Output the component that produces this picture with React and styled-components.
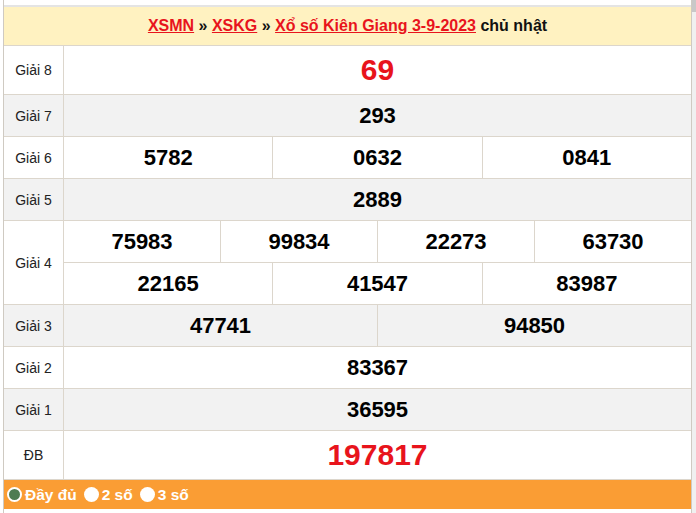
import React from 'react';
import styled, { createGlobalStyle } from 'styled-components';

const GlobalStyle = createGlobalStyle`
  html, body {
    margin: 0;
    padding: 0;
    background: #fff;
    font-family: "Liberation Sans", Arial, sans-serif;
  }
`;

const prizes = [
  { label: 'Giải 8', rows: [['69']], big: true, tall: true },
  { label: 'Giải 7', rows: [['293']] },
  { label: 'Giải 6', rows: [['5782', '0632', '0841']] },
  { label: 'Giải 5', rows: [['2889']] },
  { label: 'Giải 4', rows: [['75983', '99834', '22273', '63730'], ['22165', '41547', '83987']] },
  { label: 'Giải 3', rows: [['47741', '94850']] },
  { label: 'Giải 2', rows: [['83367']] },
  { label: 'Giải 1', rows: [['36595']] },
  { label: 'ĐB', rows: [['197817']], big: true, tall: true },
];

const App = () => (
  <>
    <GlobalStyle />
    <Page>
      <Main>
        <TopStrip />
        <Header>
          <Crumb href="#">XSMN</Crumb> » <Crumb href="#">XSKG</Crumb> »{' '}
          <Crumb href="#">Xổ số Kiên Giang 3-9-2023</Crumb> chủ nhật
        </Header>
        <Table>
          {prizes.map((p, i) => (
            <Row key={p.label} $alt={i % 2 === 1}>
              <Label>{p.label}</Label>
              <Numbers>
                {p.rows.map((r, j) => (
                  <NumRow key={j} $tall={p.tall} $first={j === 0}>
                    {r.map((n, k) => (
                      <Num key={k} $big={p.big} $first={k === 0}>
                        {n}
                      </Num>
                    ))}
                  </NumRow>
                ))}
              </Numbers>
            </Row>
          ))}
        </Table>
        <Footer>
          <Option>
            <Radio $checked />
            Đầy đủ
          </Option>
          <Option>
            <Radio />
            2 số
          </Option>
          <Option>
            <Radio />
            3 số
          </Option>
        </Footer>
      </Main>
      <Scroll />
    </Page>
  </>
);

const Page = styled.div`
  display: flex;
  width: 696px;
  height: 513px;
  overflow: hidden;
  padding-left: 3px;
  box-sizing: border-box;
`;

const Main = styled.div`
  width: 689px;
  border-left: 1px solid #cfcac2;
  border-right: 1px solid #cfcac2;
  box-sizing: border-box;
  display: flex;
  flex-direction: column;
`;

const TopStrip = styled.div`
  height: 5px;
  background: #fff;
  border-bottom: 2px solid #e4e4e4;
`;

const Header = styled.div`
  height: 38px;
  background: #fff2c1;
  border-bottom: 1px solid #dcd6cc;
  display: flex;
  align-items: center;
  justify-content: center;
  white-space: pre;
  font-size: 16px;
  font-weight: bold;
  color: #111;
`;

const Crumb = styled.a`
  color: #e8141c;
  text-decoration: underline;
`;

const Table = styled.div`
  display: flex;
  flex-direction: column;
`;

const Row = styled.div`
  display: flex;
  background: ${({ $alt }) => ($alt ? '#f2f2f2' : '#fff')};
  border-bottom: 1px solid #dcd6cc;
`;

const Label = styled.div`
  width: 59px;
  flex: none;
  border-right: 1px solid #dcd6cc;
  display: flex;
  align-items: center;
  justify-content: center;
  font-size: 14px;
  color: #222;
`;

const Numbers = styled.div`
  flex: 1;
  display: flex;
  flex-direction: column;
`;

const NumRow = styled.div`
  display: flex;
  height: ${({ $tall }) => ($tall ? 48 : 41)}px;
  border-top: ${({ $first }) => ($first ? 'none' : '1px solid #dcd6cc')};
`;

const Num = styled.div`
  flex: 1;
  display: flex;
  align-items: center;
  justify-content: center;
  border-left: ${({ $first }) => ($first ? 'none' : '1px solid #dcd6cc')};
  font-weight: bold;
  font-size: ${({ $big }) => ($big ? '30px' : '22px')};
  color: ${({ $big }) => ($big ? '#e8141c' : '#000')};
`;

const Footer = styled.div`
  height: 29px;
  background: #fa9d34;
  display: flex;
  align-items: center;
  padding-left: 3px;
  gap: 7px;
`;

const Option = styled.label`
  display: flex;
  align-items: center;
  gap: 3px;
  color: #fff;
  font-weight: bold;
  font-size: 15.5px;
`;

const Radio = styled.span`
  box-sizing: border-box;
  width: 15px;
  height: 15px;
  border-radius: 50%;
  background: ${({ $checked }) => ($checked ? '#4f7c52' : '#fff')};
  border: ${({ $checked }) => ($checked ? '2.5px solid #fff' : 'none')};
`;

const Scroll = styled.div`
  width: 4px;
  background: linear-gradient(#c8c8c8 0 12px, #f0f0f0 12px);
`;

export default App;
